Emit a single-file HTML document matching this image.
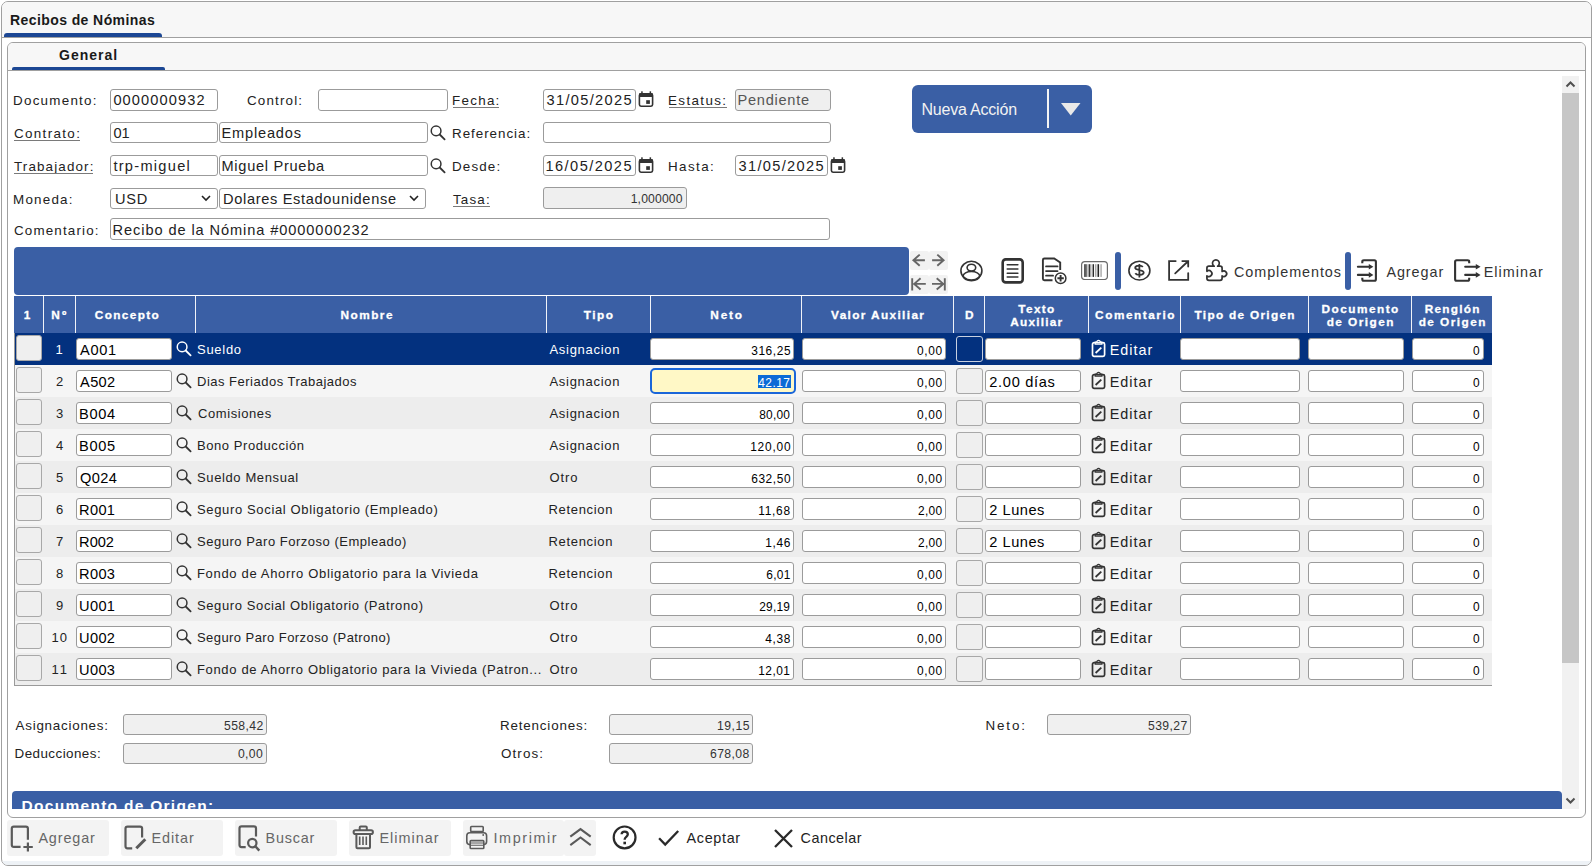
<!DOCTYPE html>
<html><head><meta charset="utf-8"><style>
html,body{margin:0;padding:0;width:1592px;height:867px;overflow:hidden;background:#fff}
body{position:relative;font-family:"Liberation Sans",sans-serif}
div,svg{position:absolute}
.t{white-space:pre;line-height:normal;font-family:"Liberation Sans",sans-serif}
</style></head><body>
<div style="left:1px;top:1px;width:1591px;height:865px;box-sizing:border-box;border:1px solid #a0a0a0;border-radius:7px;background:#fff"></div>
<div style="left:2px;top:2px;width:1589px;height:35px;background:#f7f7f7;border-radius:6px 6px 0 0"></div>
<div style="left:1px;top:37px;width:1591px;height:1px;background:#a0a0a0"></div>
<div style="left:4px;top:33px;width:158px;height:4px;background:#1c4794;border-radius:3px 3px 0 0"></div>
<div class="t" style="left:10.00px;top:12.00px;font-size:14px;font-weight:700;color:#1a1a1a;letter-spacing:0.412px;">Recibos de Nóminas</div>
<div style="left:7px;top:42px;width:1579px;height:776px;box-sizing:border-box;border:1px solid #a0a0a0;border-radius:6px;background:#fff"></div>
<div style="left:8px;top:43px;width:1577px;height:27px;background:#f7f7f7;border-radius:5px 5px 0 0"></div>
<div style="left:7px;top:70px;width:1579px;height:1px;background:#a0a0a0"></div>
<div style="left:12px;top:67px;width:153px;height:3px;background:#1c4794;border-radius:2px 2px 0 0"></div>
<div class="t" style="left:59.00px;top:47.00px;font-size:14px;font-weight:700;color:#1a1a1a;letter-spacing:1.000px;">General</div>
<div style="left:2px;top:2px;width:1589px;height:863px;border-radius:6px;overflow:hidden"><div style="left:0;top:859px;width:1589px;height:4px;background:#eef2f6"></div></div>
<div style="left:1562px;top:76px;width:17px;height:733px;background:#f1f1f1"></div>
<div style="left:1562px;top:93px;width:17px;height:570px;background:#c6c6c6"></div>
<svg style="position:absolute;left:1562px;top:76px;" width="17" height="17" viewBox="0 0 17 17"><path d="M4.5 10.5 L8.5 6.5 L12.5 10.5" fill="none" stroke="#505050" stroke-width="2"/></svg>
<svg style="position:absolute;left:1562px;top:792px;" width="17" height="17" viewBox="0 0 17 17"><path d="M4.5 6.5 L8.5 10.5 L12.5 6.5" fill="none" stroke="#505050" stroke-width="2"/></svg>
<div class="t" style="left:13.00px;top:93.00px;font-size:13.4px;font-weight:400;color:#222222;letter-spacing:1.256px;">Documento:</div>
<div style="left:110px;top:89px;width:108px;height:22px;box-sizing:border-box;background:#fff;border:1px solid #9b9b9b;border-radius:3px"></div>
<div class="t" style="left:113.40px;top:92.00px;font-size:14.6px;font-weight:400;color:#222222;letter-spacing:1.111px;">0000000932</div>
<div class="t" style="left:247.00px;top:93.00px;font-size:13.4px;font-weight:400;color:#222222;letter-spacing:1.157px;">Control:</div>
<div style="left:318px;top:89px;width:130px;height:22px;box-sizing:border-box;background:#fff;border:1px solid #9b9b9b;border-radius:3px"></div>
<div class="t" style="left:452.00px;top:93.00px;font-size:13.4px;font-weight:400;color:#222222;letter-spacing:1.280px;">Fecha:</div>
<div style="left:453px;top:107px;width:46px;height:1px;background:#7a7a7a"></div>
<div style="left:543px;top:89px;width:93px;height:22px;box-sizing:border-box;background:#fff;border:1px solid #9b9b9b;border-radius:3px"></div>
<div class="t" style="left:546.50px;top:92.00px;font-size:14.6px;font-weight:400;color:#222222;letter-spacing:1.333px;">31/05/2025</div>
<svg style="position:absolute;left:638px;top:91px;" width="16" height="17" viewBox="0 0 16 17"><rect x="1.4" y="2.9" width="13.2" height="12.3" rx="1.6" fill="none" stroke="#333" stroke-width="1.6"/><rect x="1" y="2.3" width="14" height="3.6" rx="1" fill="#333"/><rect x="3.2" y="0.3" width="1.5" height="2.5" fill="#333"/><rect x="11.6" y="0.3" width="1.5" height="2.5" fill="#333"/><rect x="8.2" y="9.2" width="3.7" height="3.7" fill="#333"/></svg>
<div class="t" style="left:668.00px;top:93.00px;font-size:13.4px;font-weight:400;color:#222222;letter-spacing:1.386px;">Estatus:</div>
<div style="left:669px;top:107px;width:58px;height:1px;background:#7a7a7a"></div>
<div style="left:735px;top:89px;width:96px;height:22px;box-sizing:border-box;background:#efefef;border:1px solid #9b9b9b;border-radius:3px"></div>
<div class="t" style="left:737.60px;top:92.00px;font-size:14.6px;font-weight:400;color:#555;letter-spacing:0.713px;">Pendiente</div>
<div class="t" style="left:14.00px;top:126.00px;font-size:13.4px;font-weight:400;color:#222222;letter-spacing:1.350px;">Contrato:</div>
<div style="left:14px;top:140px;width:66px;height:1px;background:#7a7a7a"></div>
<div style="left:110px;top:122px;width:108px;height:21px;box-sizing:border-box;background:#fff;border:1px solid #9b9b9b;border-radius:3px"></div>
<div class="t" style="left:113.40px;top:125.00px;font-size:14.6px;font-weight:400;color:#222222;letter-spacing:0.000px;">01</div>
<div style="left:219px;top:122px;width:209px;height:21px;box-sizing:border-box;background:#fff;border:1px solid #9b9b9b;border-radius:3px"></div>
<div class="t" style="left:221.50px;top:125.00px;font-size:14.6px;font-weight:400;color:#222222;letter-spacing:0.812px;">Empleados</div>
<svg style="position:absolute;left:430px;top:124.5px;" width="17" height="17" viewBox="0 0 17 17"><circle cx="6.1" cy="5.9" r="4.85" fill="none" stroke="#333" stroke-width="1.5"/><path d="M9.7 9.5 L14.6 14.4" stroke="#333" stroke-width="1.8" stroke-linecap="round"/></svg>
<div class="t" style="left:452.00px;top:126.00px;font-size:13.4px;font-weight:400;color:#222222;letter-spacing:0.970px;">Referencia:</div>
<div style="left:543px;top:122px;width:288px;height:21px;box-sizing:border-box;background:#fff;border:1px solid #9b9b9b;border-radius:3px"></div>
<div class="t" style="left:14.00px;top:159.00px;font-size:13.4px;font-weight:400;color:#222222;letter-spacing:1.140px;">Trabajador:</div>
<div style="left:14px;top:173px;width:79px;height:1px;background:#7a7a7a"></div>
<div style="left:110px;top:155px;width:108px;height:21px;box-sizing:border-box;background:#fff;border:1px solid #9b9b9b;border-radius:3px"></div>
<div class="t" style="left:113.40px;top:158.00px;font-size:14.6px;font-weight:400;color:#222222;letter-spacing:1.278px;">trp-miguel</div>
<div style="left:219px;top:155px;width:209px;height:21px;box-sizing:border-box;background:#fff;border:1px solid #9b9b9b;border-radius:3px"></div>
<div class="t" style="left:221.50px;top:158.00px;font-size:14.6px;font-weight:400;color:#222222;letter-spacing:0.708px;">Miguel Prueba</div>
<svg style="position:absolute;left:430px;top:157.5px;" width="17" height="17" viewBox="0 0 17 17"><circle cx="6.1" cy="5.9" r="4.85" fill="none" stroke="#333" stroke-width="1.5"/><path d="M9.7 9.5 L14.6 14.4" stroke="#333" stroke-width="1.8" stroke-linecap="round"/></svg>
<div class="t" style="left:452.00px;top:159.00px;font-size:13.4px;font-weight:400;color:#222222;letter-spacing:1.140px;">Desde:</div>
<div style="left:543px;top:155px;width:93px;height:21px;box-sizing:border-box;background:#fff;border:1px solid #9b9b9b;border-radius:3px"></div>
<div class="t" style="left:545.50px;top:158.00px;font-size:14.6px;font-weight:400;color:#222222;letter-spacing:1.444px;">16/05/2025</div>
<svg style="position:absolute;left:638px;top:157px;" width="16" height="17" viewBox="0 0 16 17"><rect x="1.4" y="2.9" width="13.2" height="12.3" rx="1.6" fill="none" stroke="#333" stroke-width="1.6"/><rect x="1" y="2.3" width="14" height="3.6" rx="1" fill="#333"/><rect x="3.2" y="0.3" width="1.5" height="2.5" fill="#333"/><rect x="11.6" y="0.3" width="1.5" height="2.5" fill="#333"/><rect x="8.2" y="9.2" width="3.7" height="3.7" fill="#333"/></svg>
<div class="t" style="left:668.00px;top:159.00px;font-size:13.4px;font-weight:400;color:#222222;letter-spacing:1.400px;">Hasta:</div>
<div style="left:735px;top:155px;width:93px;height:21px;box-sizing:border-box;background:#fff;border:1px solid #9b9b9b;border-radius:3px"></div>
<div class="t" style="left:738.50px;top:158.00px;font-size:14.6px;font-weight:400;color:#222222;letter-spacing:1.333px;">31/05/2025</div>
<svg style="position:absolute;left:830px;top:157px;" width="16" height="17" viewBox="0 0 16 17"><rect x="1.4" y="2.9" width="13.2" height="12.3" rx="1.6" fill="none" stroke="#333" stroke-width="1.6"/><rect x="1" y="2.3" width="14" height="3.6" rx="1" fill="#333"/><rect x="3.2" y="0.3" width="1.5" height="2.5" fill="#333"/><rect x="11.6" y="0.3" width="1.5" height="2.5" fill="#333"/><rect x="8.2" y="9.2" width="3.7" height="3.7" fill="#333"/></svg>
<div class="t" style="left:13.00px;top:192.00px;font-size:13.4px;font-weight:400;color:#222222;letter-spacing:1.233px;">Moneda:</div>
<div style="left:110px;top:188px;width:108px;height:21px;box-sizing:border-box;background:#fff;border:1px solid #9b9b9b;border-radius:3px"></div>
<div class="t" style="left:115.00px;top:191.00px;font-size:14.6px;font-weight:400;color:#222222;letter-spacing:0.750px;">USD</div>
<svg style="position:absolute;left:200px;top:193px;" width="12" height="10" viewBox="0 0 12 10"><path d="M2 3 L6 7 L10 3" fill="none" stroke="#222" stroke-width="1.6"/></svg>
<div style="left:219px;top:188px;width:207px;height:21px;box-sizing:border-box;background:#fff;border:1px solid #9b9b9b;border-radius:3px"></div>
<div class="t" style="left:223.00px;top:191.00px;font-size:14.6px;font-weight:400;color:#222222;letter-spacing:0.667px;">Dolares Estadounidense</div>
<svg style="position:absolute;left:408px;top:193px;" width="12" height="10" viewBox="0 0 12 10"><path d="M2 3 L6 7 L10 3" fill="none" stroke="#222" stroke-width="1.6"/></svg>
<div class="t" style="left:453.00px;top:192.00px;font-size:13.4px;font-weight:400;color:#222222;letter-spacing:1.150px;">Tasa:</div>
<div style="left:453px;top:206px;width:37px;height:1px;background:#7a7a7a"></div>
<div style="left:543px;top:187px;width:144px;height:22px;box-sizing:border-box;background:#efefef;border:1px solid #9b9b9b;border-radius:3px"></div>
<div class="t" style="left:630.70px;top:192.00px;font-size:12.2px;font-weight:400;color:#333;letter-spacing:0.143px;">1,000000</div>
<div class="t" style="left:14.00px;top:223.00px;font-size:13.4px;font-weight:400;color:#222222;letter-spacing:1.160px;">Comentario:</div>
<div style="left:110px;top:218px;width:720px;height:22px;box-sizing:border-box;background:#fff;border:1px solid #9b9b9b;border-radius:3px"></div>
<div class="t" style="left:112.60px;top:222.00px;font-size:14.6px;font-weight:400;color:#222222;letter-spacing:0.907px;">Recibo de la Nómina #0000000232</div>
<div style="left:912px;top:85px;width:180px;height:48px;background:#3a5fa5;border-radius:6px"></div>
<div class="t" style="left:921.40px;top:101.00px;font-size:16px;font-weight:400;color:#f2f2f2;letter-spacing:-0.200px;transform-origin:0 0;">Nueva Acción</div>
<div style="left:1047px;top:89px;width:2px;height:39px;background:#f4f4f4"></div>
<svg style="position:absolute;left:1061px;top:103px;" width="20" height="13" viewBox="0 0 20 13"><path d="M0 0 L19.5 0 L9.75 12.5 Z" fill="#e9e9e9"/></svg>
<div style="left:14px;top:247px;width:895px;height:48px;background:#3a5fa5;border-radius:4px"></div>
<div style="left:910px;top:251px;width:19px;height:19px;background:#f2f2f2;border-radius:2px"></div>
<div style="left:929px;top:251px;width:19px;height:19px;background:#f2f2f2;border-radius:2px"></div>
<div style="left:910px;top:275px;width:19px;height:19px;background:#f2f2f2;border-radius:2px"></div>
<div style="left:929px;top:275px;width:19px;height:19px;background:#f2f2f2;border-radius:2px"></div>
<svg style="position:absolute;left:910px;top:251px;" width="38" height="43" viewBox="0 0 38 43"><path d="M14.9 9.2 H3.2 M9.7 3.6 L3.4 9.2 L9.7 14.8 M22.1 9.2 H33.8 M27.3 3.6 L33.6 9.2 L27.3 14.8" fill="none" stroke="#666666" stroke-width="1.9"/><path d="M2.2 27.2 V39.6 M15.8 32.9 H4.2 M10.6 27.3 L4.2 32.9 L10.6 38.5 M34.8 27.2 V39.6 M22 32.9 H33.3 M26.7 27.3 L33.3 32.9 L26.7 38.5" fill="none" stroke="#666666" stroke-width="1.9"/></svg>
<svg style="position:absolute;left:959px;top:259px;" width="25" height="24" viewBox="0 0 25 24"><ellipse cx="12.4" cy="11.7" rx="10.5" ry="9.4" fill="none" stroke="#333" stroke-width="1.6"/><ellipse cx="12.4" cy="8.6" rx="4.3" ry="3.4" fill="none" stroke="#333" stroke-width="1.6"/><ellipse cx="12.4" cy="17.1" rx="8.3" ry="4.6" fill="none" stroke="#333" stroke-width="1.6"/></svg>
<svg style="position:absolute;left:1000px;top:257px;" width="26" height="28" viewBox="0 0 26 28"><rect x="2.7" y="2.4" width="20" height="23" rx="3" fill="none" stroke="#333" stroke-width="2.6"/><path d="M7.2 7.7 H17.9 M7.2 11.9 H17.9 M7.2 16.3 H17.9 M7.2 20.1 H17.9" stroke="#333" stroke-width="1.5" stroke-linecap="round"/></svg>
<svg style="position:absolute;left:1040px;top:256px;" width="30" height="30" viewBox="0 0 30 30"><path d="M12.5 24.3 H4.4 Q2.9 24.3 2.9 22.8 V4 Q2.9 2.5 4.4 2.5 H14.2 L20.2 6.5 V14.1" fill="none" stroke="#333" stroke-width="1.9"/><path d="M6 10.4 H17.6 M6 15.1 H17.6 M6 19.7 H13.1" stroke="#333" stroke-width="1.7" stroke-linecap="round"/><circle cx="20.6" cy="22.3" r="5.3" fill="#fff" stroke="#333" stroke-width="1.5"/><path d="M20.6 19.1 V25.5 M17.4 22.3 H23.8" stroke="#333" stroke-width="1.9"/></svg>
<svg style="position:absolute;left:1081px;top:261px;" width="27" height="19" viewBox="0 0 27 19"><rect x="0.6" y="0.6" width="25.8" height="17.9" rx="3.2" fill="none" stroke="#6a6a6a" stroke-width="1.2"/><rect x="3.2" y="3.2" width="1.6" height="12.7" fill="#333"/><rect x="4.8" y="3.2" width="1.6" height="12.7" fill="#777"/><rect x="7.6" y="3.2" width="1.3" height="12.7" fill="#222"/><rect x="9.2" y="3.2" width="1.2" height="12.7" fill="#999"/><rect x="11.6" y="3.2" width="1.3" height="12.7" fill="#111"/><rect x="13.9" y="3.2" width="1.6" height="12.7" fill="#aaa"/><rect x="16.5" y="3.2" width="1.6" height="12.7" fill="#222"/><rect x="19.2" y="3.2" width="1.8" height="12.7" fill="#bbb"/></svg>
<div style="left:1115px;top:252px;width:6px;height:38px;background:#3a5fa5;border-radius:3px"></div>
<svg style="position:absolute;left:1127px;top:259px;" width="25" height="23" viewBox="0 0 25 23"><ellipse cx="12.4" cy="11.6" rx="10.5" ry="9.4" fill="none" stroke="#333" stroke-width="1.6"/><path d="M15.8 7.9 C14.8 6.3 8.2 6 8.2 8.9 C8.2 11.2 16.7 10.8 16.7 13.6 C16.7 16.6 9.6 16.6 8.3 14.3 M12.4 4.9 V18.6" fill="none" stroke="#333" stroke-width="1.8"/></svg>
<svg style="position:absolute;left:1167px;top:259px;" width="24" height="23" viewBox="0 0 24 23"><path d="M8.7 2.1 H2.1 V20.9 H21.2 V14.1" fill="none" stroke="#333" stroke-width="1.8" stroke-linecap="round"/><path d="M8.2 14.3 L20.8 2.5 M15.3 2.1 H21.2 V7.5" fill="none" stroke="#333" stroke-width="1.8" stroke-linecap="round"/></svg>
<svg style="position:absolute;left:1204px;top:258px;" width="27" height="25" viewBox="0 0 27 25"><path d="M2.9 10.2 Q2.9 8.2 4.9 8.2 H10.2 A3.4 3.4 0 1 1 13.6 8.2 H16.1 Q18.1 8.2 18.1 10.2 V13.5 A2.8 2.8 0 1 1 18.1 17.9 V20.3 Q18.1 22.3 16.1 22.3 H4.9 Q2.9 22.3 2.9 20.3 V17.8 A3 3 0 1 0 2.9 13.3 Z" fill="none" stroke="#333" stroke-width="1.7" stroke-linejoin="round"/></svg>
<div class="t" style="left:1234.00px;top:264.00px;font-size:14.4px;font-weight:400;color:#333;letter-spacing:0.927px;">Complementos</div>
<div style="left:1345px;top:252px;width:6px;height:38px;background:#3a5fa5;border-radius:3px"></div>
<svg style="position:absolute;left:1355px;top:257px;" width="24" height="27" viewBox="0 0 24 27"><path d="M7.3 6.2 V4.7 Q7.3 3.2 8.8 3.2 H19.4 Q20.9 3.2 20.9 4.7 V22.3 Q20.9 23.8 19.4 23.8 H8.8 Q7.3 23.8 7.3 22.3 V20.7" fill="none" stroke="#333" stroke-width="2.1"/><path d="M2.9 9.75 H14.5 M2.9 17.9 H14.5" stroke="#333" stroke-width="2.1" stroke-linecap="round"/><path d="M13.8 6.9 L18.4 9.75 L13.8 12.6 Z M13.8 15.05 L18.4 17.9 L13.8 20.75 Z" fill="#333"/></svg>
<div class="t" style="left:1386.40px;top:264.00px;font-size:14.4px;font-weight:400;color:#333;letter-spacing:0.933px;">Agregar</div>
<svg style="position:absolute;left:1452px;top:257px;" width="31" height="27" viewBox="0 0 31 27"><path d="M17.2 6.3 V4.7 Q17.2 3.2 15.7 3.2 H4.6 Q3.1 3.2 3.1 4.7 V22.3 Q3.1 23.8 4.6 23.8 H15.7 Q17.2 23.8 17.2 22.3 V20.7" fill="none" stroke="#333" stroke-width="2.1"/><path d="M13.2 9.75 H24.5 M13.2 17.9 H24.5" stroke="#333" stroke-width="2.1" stroke-linecap="round"/><path d="M23.8 6.9 L28.6 9.75 L23.8 12.6 Z M23.8 15.05 L28.6 17.9 L23.8 20.75 Z" fill="#333"/></svg>
<div class="t" style="left:1483.70px;top:264.00px;font-size:14.4px;font-weight:400;color:#333;letter-spacing:1.014px;">Eliminar</div>
<div style="left:14px;top:296px;width:1478px;height:37px;background:#3a5fa5"></div>
<div style="left:43px;top:296px;width:1px;height:37px;background:#f0f3f8"></div>
<div style="left:75px;top:296px;width:1px;height:37px;background:#f0f3f8"></div>
<div style="left:195px;top:296px;width:1px;height:37px;background:#f0f3f8"></div>
<div style="left:546px;top:296px;width:1px;height:37px;background:#f0f3f8"></div>
<div style="left:650px;top:296px;width:1px;height:37px;background:#f0f3f8"></div>
<div style="left:801px;top:296px;width:1px;height:37px;background:#f0f3f8"></div>
<div style="left:953px;top:296px;width:1px;height:37px;background:#f0f3f8"></div>
<div style="left:984px;top:296px;width:1px;height:37px;background:#f0f3f8"></div>
<div style="left:1088px;top:296px;width:1px;height:37px;background:#f0f3f8"></div>
<div style="left:1180px;top:296px;width:1px;height:37px;background:#f0f3f8"></div>
<div style="left:1308px;top:296px;width:1px;height:37px;background:#f0f3f8"></div>
<div style="left:1411px;top:296px;width:1px;height:37px;background:#f0f3f8"></div>
<div class="t" style="left:23.80px;top:308.00px;font-size:11.8px;font-weight:700;color:#ffffff;letter-spacing:0.000px;-webkit-text-stroke:0.3px #fff;">1</div>
<div class="t" style="left:51.32px;top:308.00px;font-size:11.8px;font-weight:700;color:#ffffff;letter-spacing:2.150px;-webkit-text-stroke:0.3px #fff;">Nº</div>
<div class="t" style="left:94.78px;top:308.00px;font-size:11.8px;font-weight:700;color:#ffffff;letter-spacing:1.376px;-webkit-text-stroke:0.3px #fff;">Concepto</div>
<div class="t" style="left:340.44px;top:308.00px;font-size:11.8px;font-weight:700;color:#ffffff;letter-spacing:1.504px;-webkit-text-stroke:0.3px #fff;">Nombre</div>
<div class="t" style="left:583.86px;top:308.00px;font-size:11.8px;font-weight:700;color:#ffffff;letter-spacing:1.430px;-webkit-text-stroke:0.3px #fff;">Tipo</div>
<div class="t" style="left:710.35px;top:308.00px;font-size:11.8px;font-weight:700;color:#ffffff;letter-spacing:1.770px;-webkit-text-stroke:0.3px #fff;">Neto</div>
<div class="t" style="left:831.04px;top:308.00px;font-size:11.8px;font-weight:700;color:#ffffff;letter-spacing:1.378px;-webkit-text-stroke:0.3px #fff;">Valor Auxiliar</div>
<div class="t" style="left:965.00px;top:308.00px;font-size:11.8px;font-weight:700;color:#ffffff;letter-spacing:0.000px;-webkit-text-stroke:0.3px #fff;">D</div>
<div class="t" style="left:1018.32px;top:302.00px;font-size:11.8px;font-weight:700;color:#ffffff;letter-spacing:1.340px;-webkit-text-stroke:0.3px #fff;">Texto</div>
<div class="t" style="left:1010.24px;top:315.00px;font-size:11.8px;font-weight:700;color:#ffffff;letter-spacing:1.217px;-webkit-text-stroke:0.3px #fff;">Auxiliar</div>
<div class="t" style="left:1095.11px;top:308.00px;font-size:11.8px;font-weight:700;color:#ffffff;letter-spacing:1.531px;-webkit-text-stroke:0.3px #fff;">Comentario</div>
<div class="t" style="left:1194.51px;top:308.00px;font-size:11.8px;font-weight:700;color:#ffffff;letter-spacing:1.307px;-webkit-text-stroke:0.3px #fff;">Tipo de Origen</div>
<div class="t" style="left:1321.62px;top:302.00px;font-size:11.8px;font-weight:700;color:#ffffff;letter-spacing:1.470px;-webkit-text-stroke:0.3px #fff;">Documento</div>
<div class="t" style="left:1326.67px;top:315.00px;font-size:11.8px;font-weight:700;color:#ffffff;letter-spacing:1.457px;-webkit-text-stroke:0.3px #fff;">de Origen</div>
<div class="t" style="left:1424.73px;top:302.00px;font-size:11.8px;font-weight:700;color:#ffffff;letter-spacing:1.257px;-webkit-text-stroke:0.3px #fff;">Renglón</div>
<div class="t" style="left:1418.67px;top:315.00px;font-size:11.8px;font-weight:700;color:#ffffff;letter-spacing:1.457px;-webkit-text-stroke:0.3px #fff;">de Origen</div>
<div style="left:14px;top:333px;width:1px;height:353px;background:#9a9a9a"></div>
<div style="left:14px;top:685px;width:1478px;height:1px;background:#9a9a9a"></div>
<div style="left:15px;top:333px;width:1477px;height:32px;background:#03317f"></div>
<div style="left:16px;top:335px;width:26px;height:26px;box-sizing:border-box;background:#efefef;border:1px solid #a8a8a8;border-radius:3px"></div>
<div class="t" style="left:55.60px;top:342.00px;font-size:13px;font-weight:400;color:#ffffff;letter-spacing:0.000px;">1</div>
<div style="left:76px;top:338px;width:96px;height:22px;box-sizing:border-box;background:#fff;border:1px solid #9b9b9b;border-radius:3px"></div>
<div class="t" style="left:80.10px;top:342.00px;font-size:14.6px;font-weight:400;color:#000;letter-spacing:0.667px;">A001</div>
<svg style="position:absolute;left:176px;top:341px;" width="17" height="17" viewBox="0 0 17 17"><circle cx="6.1" cy="5.9" r="4.85" fill="none" stroke="#fff" stroke-width="1.5"/><path d="M9.7 9.5 L14.6 14.4" stroke="#fff" stroke-width="1.8" stroke-linecap="round"/></svg>
<div class="t" style="left:197.00px;top:342.00px;font-size:13.0px;font-weight:400;color:#ffffff;letter-spacing:0.714px;">Sueldo</div>
<div class="t" style="left:549.50px;top:342.00px;font-size:13.0px;font-weight:400;color:#ffffff;letter-spacing:0.700px;">Asignacion</div>
<div style="left:650px;top:338px;width:144px;height:22px;box-sizing:border-box;background:#fff;border:1px solid #9b9b9b;border-radius:3px"></div>
<div class="t" style="left:751.20px;top:344.00px;font-size:11.9px;font-weight:400;color:#000;letter-spacing:0.600px;">316,25</div>
<div style="left:802px;top:338px;width:144px;height:22px;box-sizing:border-box;background:#fff;border:1px solid #9b9b9b;border-radius:3px"></div>
<div class="t" style="left:917.00px;top:344.00px;font-size:11.9px;font-weight:400;color:#000;letter-spacing:0.667px;">0,00</div>
<div style="left:956px;top:336px;width:27px;height:26px;box-sizing:border-box;background:#03317f;border:1px solid #c8d0e0;border-radius:3px"></div>
<div style="left:985px;top:338px;width:96px;height:22px;box-sizing:border-box;background:#fff;border:1px solid #9b9b9b;border-radius:3px"></div>
<svg style="position:absolute;left:1090px;top:339px;" width="17" height="20" viewBox="0 0 17 20"><rect x="2.5" y="3.6" width="12.1" height="13.8" rx="1.6" fill="none" stroke="#fff" stroke-width="1.7"/><path d="M5.2 3.2 V5.2 H11.9 V3.2 H10.3 A1.75 1.75 0 0 0 6.8 3.2 Z" fill="none" stroke="#fff" stroke-width="1.3" stroke-linejoin="round"/><path d="M5.6 14 L11.3 8.6" stroke="#fff" stroke-width="1.8"/></svg>
<div class="t" style="left:1109.70px;top:342.00px;font-size:14.4px;font-weight:400;color:#ffffff;letter-spacing:0.980px;">Editar</div>
<div style="left:1180px;top:338px;width:120px;height:22px;box-sizing:border-box;background:#fff;border:1px solid #9b9b9b;border-radius:3px"></div>
<div style="left:1308px;top:338px;width:96px;height:22px;box-sizing:border-box;background:#fff;border:1px solid #9b9b9b;border-radius:3px"></div>
<div style="left:1412px;top:338px;width:72px;height:22px;box-sizing:border-box;background:#fff;border:1px solid #9b9b9b;border-radius:3px"></div>
<div class="t" style="left:1473.00px;top:344.00px;font-size:11.9px;font-weight:400;color:#000;letter-spacing:0.000px;">0</div>
<div style="left:15px;top:365px;width:1477px;height:32px;background:#f5f5f5"></div>
<div style="left:16px;top:367px;width:26px;height:26px;box-sizing:border-box;background:#efefef;border:1px solid #a8a8a8;border-radius:3px"></div>
<div class="t" style="left:56.10px;top:374.00px;font-size:13px;font-weight:400;color:#222222;letter-spacing:0.000px;">2</div>
<div style="left:76px;top:370px;width:96px;height:22px;box-sizing:border-box;background:#fff;border:1px solid #9b9b9b;border-radius:3px"></div>
<div class="t" style="left:80.10px;top:374.00px;font-size:14.6px;font-weight:400;color:#000;letter-spacing:0.333px;">A502</div>
<svg style="position:absolute;left:176px;top:373px;" width="17" height="17" viewBox="0 0 17 17"><circle cx="6.1" cy="5.9" r="4.85" fill="none" stroke="#333" stroke-width="1.5"/><path d="M9.7 9.5 L14.6 14.4" stroke="#333" stroke-width="1.8" stroke-linecap="round"/></svg>
<div class="t" style="left:197.00px;top:374.00px;font-size:13.0px;font-weight:400;color:#222222;letter-spacing:0.496px;">Dias Feriados Trabajados</div>
<div class="t" style="left:549.50px;top:374.00px;font-size:13.0px;font-weight:400;color:#222222;letter-spacing:0.700px;">Asignacion</div>
<div style="left:650px;top:368px;width:146px;height:26px;box-sizing:border-box;background:#fff8c6;border:2px solid #1a66d9;border-radius:5px"></div>
<div style="left:758px;top:375px;width:33px;height:13px;background:#0b6ad6"></div>
<div class="t" style="left:758.20px;top:376.00px;font-size:11.9px;font-weight:400;color:#fff;letter-spacing:0.500px;">42.17</div>
<div style="left:802px;top:370px;width:144px;height:22px;box-sizing:border-box;background:#fff;border:1px solid #9b9b9b;border-radius:3px"></div>
<div class="t" style="left:917.00px;top:376.00px;font-size:11.9px;font-weight:400;color:#000;letter-spacing:0.667px;">0,00</div>
<div style="left:956px;top:368px;width:27px;height:26px;box-sizing:border-box;background:#efefef;border:1px solid #a8a8a8;border-radius:3px"></div>
<div style="left:985px;top:370px;width:96px;height:22px;box-sizing:border-box;background:#fff;border:1px solid #9b9b9b;border-radius:3px"></div>
<div class="t" style="left:989.30px;top:374.00px;font-size:14.6px;font-weight:400;color:#000;letter-spacing:0.690px;">2.00 días</div>
<svg style="position:absolute;left:1090px;top:371px;" width="17" height="20" viewBox="0 0 17 20"><rect x="2.5" y="3.6" width="12.1" height="13.8" rx="1.6" fill="none" stroke="#333" stroke-width="1.7"/><path d="M5.2 3.2 V5.2 H11.9 V3.2 H10.3 A1.75 1.75 0 0 0 6.8 3.2 Z" fill="none" stroke="#333" stroke-width="1.3" stroke-linejoin="round"/><path d="M5.6 14 L11.3 8.6" stroke="#333" stroke-width="1.8"/></svg>
<div class="t" style="left:1109.70px;top:374.00px;font-size:14.4px;font-weight:400;color:#222222;letter-spacing:0.980px;">Editar</div>
<div style="left:1180px;top:370px;width:120px;height:22px;box-sizing:border-box;background:#fff;border:1px solid #9b9b9b;border-radius:3px"></div>
<div style="left:1308px;top:370px;width:96px;height:22px;box-sizing:border-box;background:#fff;border:1px solid #9b9b9b;border-radius:3px"></div>
<div style="left:1412px;top:370px;width:72px;height:22px;box-sizing:border-box;background:#fff;border:1px solid #9b9b9b;border-radius:3px"></div>
<div class="t" style="left:1473.00px;top:376.00px;font-size:11.9px;font-weight:400;color:#000;letter-spacing:0.000px;">0</div>
<div style="left:15px;top:397px;width:1477px;height:32px;background:#ededed"></div>
<div style="left:16px;top:399px;width:26px;height:26px;box-sizing:border-box;background:#efefef;border:1px solid #a8a8a8;border-radius:3px"></div>
<div class="t" style="left:56.10px;top:406.00px;font-size:13px;font-weight:400;color:#222222;letter-spacing:0.000px;">3</div>
<div style="left:76px;top:402px;width:96px;height:22px;box-sizing:border-box;background:#fff;border:1px solid #9b9b9b;border-radius:3px"></div>
<div class="t" style="left:79.10px;top:406.00px;font-size:14.6px;font-weight:400;color:#000;letter-spacing:0.667px;">B004</div>
<svg style="position:absolute;left:176px;top:405px;" width="17" height="17" viewBox="0 0 17 17"><circle cx="6.1" cy="5.9" r="4.85" fill="none" stroke="#333" stroke-width="1.5"/><path d="M9.7 9.5 L14.6 14.4" stroke="#333" stroke-width="1.8" stroke-linecap="round"/></svg>
<div class="t" style="left:198.00px;top:406.00px;font-size:13.0px;font-weight:400;color:#222222;letter-spacing:0.584px;">Comisiones</div>
<div class="t" style="left:549.50px;top:406.00px;font-size:13.0px;font-weight:400;color:#222222;letter-spacing:0.700px;">Asignacion</div>
<div style="left:650px;top:402px;width:144px;height:22px;box-sizing:border-box;background:#fff;border:1px solid #9b9b9b;border-radius:3px"></div>
<div class="t" style="left:759.20px;top:408.00px;font-size:11.9px;font-weight:400;color:#000;letter-spacing:0.250px;">80,00</div>
<div style="left:802px;top:402px;width:144px;height:22px;box-sizing:border-box;background:#fff;border:1px solid #9b9b9b;border-radius:3px"></div>
<div class="t" style="left:917.00px;top:408.00px;font-size:11.9px;font-weight:400;color:#000;letter-spacing:0.667px;">0,00</div>
<div style="left:956px;top:400px;width:27px;height:26px;box-sizing:border-box;background:#efefef;border:1px solid #a8a8a8;border-radius:3px"></div>
<div style="left:985px;top:402px;width:96px;height:22px;box-sizing:border-box;background:#fff;border:1px solid #9b9b9b;border-radius:3px"></div>
<svg style="position:absolute;left:1090px;top:403px;" width="17" height="20" viewBox="0 0 17 20"><rect x="2.5" y="3.6" width="12.1" height="13.8" rx="1.6" fill="none" stroke="#333" stroke-width="1.7"/><path d="M5.2 3.2 V5.2 H11.9 V3.2 H10.3 A1.75 1.75 0 0 0 6.8 3.2 Z" fill="none" stroke="#333" stroke-width="1.3" stroke-linejoin="round"/><path d="M5.6 14 L11.3 8.6" stroke="#333" stroke-width="1.8"/></svg>
<div class="t" style="left:1109.70px;top:406.00px;font-size:14.4px;font-weight:400;color:#222222;letter-spacing:0.980px;">Editar</div>
<div style="left:1180px;top:402px;width:120px;height:22px;box-sizing:border-box;background:#fff;border:1px solid #9b9b9b;border-radius:3px"></div>
<div style="left:1308px;top:402px;width:96px;height:22px;box-sizing:border-box;background:#fff;border:1px solid #9b9b9b;border-radius:3px"></div>
<div style="left:1412px;top:402px;width:72px;height:22px;box-sizing:border-box;background:#fff;border:1px solid #9b9b9b;border-radius:3px"></div>
<div class="t" style="left:1473.00px;top:408.00px;font-size:11.9px;font-weight:400;color:#000;letter-spacing:0.000px;">0</div>
<div style="left:15px;top:429px;width:1477px;height:32px;background:#f5f5f5"></div>
<div style="left:16px;top:431px;width:26px;height:26px;box-sizing:border-box;background:#efefef;border:1px solid #a8a8a8;border-radius:3px"></div>
<div class="t" style="left:56.10px;top:438.00px;font-size:13px;font-weight:400;color:#222222;letter-spacing:0.000px;">4</div>
<div style="left:76px;top:434px;width:96px;height:22px;box-sizing:border-box;background:#fff;border:1px solid #9b9b9b;border-radius:3px"></div>
<div class="t" style="left:79.10px;top:438.00px;font-size:14.6px;font-weight:400;color:#000;letter-spacing:0.667px;">B005</div>
<svg style="position:absolute;left:176px;top:437px;" width="17" height="17" viewBox="0 0 17 17"><circle cx="6.1" cy="5.9" r="4.85" fill="none" stroke="#333" stroke-width="1.5"/><path d="M9.7 9.5 L14.6 14.4" stroke="#333" stroke-width="1.8" stroke-linecap="round"/></svg>
<div class="t" style="left:197.00px;top:438.00px;font-size:13.0px;font-weight:400;color:#222222;letter-spacing:0.566px;">Bono Producción</div>
<div class="t" style="left:549.50px;top:438.00px;font-size:13.0px;font-weight:400;color:#222222;letter-spacing:0.700px;">Asignacion</div>
<div style="left:650px;top:434px;width:144px;height:22px;box-sizing:border-box;background:#fff;border:1px solid #9b9b9b;border-radius:3px"></div>
<div class="t" style="left:750.20px;top:440.00px;font-size:11.9px;font-weight:400;color:#000;letter-spacing:0.800px;">120,00</div>
<div style="left:802px;top:434px;width:144px;height:22px;box-sizing:border-box;background:#fff;border:1px solid #9b9b9b;border-radius:3px"></div>
<div class="t" style="left:917.00px;top:440.00px;font-size:11.9px;font-weight:400;color:#000;letter-spacing:0.667px;">0,00</div>
<div style="left:956px;top:432px;width:27px;height:26px;box-sizing:border-box;background:#efefef;border:1px solid #a8a8a8;border-radius:3px"></div>
<div style="left:985px;top:434px;width:96px;height:22px;box-sizing:border-box;background:#fff;border:1px solid #9b9b9b;border-radius:3px"></div>
<svg style="position:absolute;left:1090px;top:435px;" width="17" height="20" viewBox="0 0 17 20"><rect x="2.5" y="3.6" width="12.1" height="13.8" rx="1.6" fill="none" stroke="#333" stroke-width="1.7"/><path d="M5.2 3.2 V5.2 H11.9 V3.2 H10.3 A1.75 1.75 0 0 0 6.8 3.2 Z" fill="none" stroke="#333" stroke-width="1.3" stroke-linejoin="round"/><path d="M5.6 14 L11.3 8.6" stroke="#333" stroke-width="1.8"/></svg>
<div class="t" style="left:1109.70px;top:438.00px;font-size:14.4px;font-weight:400;color:#222222;letter-spacing:0.980px;">Editar</div>
<div style="left:1180px;top:434px;width:120px;height:22px;box-sizing:border-box;background:#fff;border:1px solid #9b9b9b;border-radius:3px"></div>
<div style="left:1308px;top:434px;width:96px;height:22px;box-sizing:border-box;background:#fff;border:1px solid #9b9b9b;border-radius:3px"></div>
<div style="left:1412px;top:434px;width:72px;height:22px;box-sizing:border-box;background:#fff;border:1px solid #9b9b9b;border-radius:3px"></div>
<div class="t" style="left:1473.00px;top:440.00px;font-size:11.9px;font-weight:400;color:#000;letter-spacing:0.000px;">0</div>
<div style="left:15px;top:461px;width:1477px;height:32px;background:#ededed"></div>
<div style="left:16px;top:463px;width:26px;height:26px;box-sizing:border-box;background:#efefef;border:1px solid #a8a8a8;border-radius:3px"></div>
<div class="t" style="left:56.10px;top:470.00px;font-size:13px;font-weight:400;color:#222222;letter-spacing:0.000px;">5</div>
<div style="left:76px;top:466px;width:96px;height:22px;box-sizing:border-box;background:#fff;border:1px solid #9b9b9b;border-radius:3px"></div>
<div class="t" style="left:80.10px;top:470.00px;font-size:14.6px;font-weight:400;color:#000;letter-spacing:0.333px;">Q024</div>
<svg style="position:absolute;left:176px;top:469px;" width="17" height="17" viewBox="0 0 17 17"><circle cx="6.1" cy="5.9" r="4.85" fill="none" stroke="#333" stroke-width="1.5"/><path d="M9.7 9.5 L14.6 14.4" stroke="#333" stroke-width="1.8" stroke-linecap="round"/></svg>
<div class="t" style="left:197.00px;top:470.00px;font-size:13.0px;font-weight:400;color:#222222;letter-spacing:0.615px;">Sueldo Mensual</div>
<div class="t" style="left:549.50px;top:470.00px;font-size:13.0px;font-weight:400;color:#222222;letter-spacing:0.907px;">Otro</div>
<div style="left:650px;top:466px;width:144px;height:22px;box-sizing:border-box;background:#fff;border:1px solid #9b9b9b;border-radius:3px"></div>
<div class="t" style="left:751.20px;top:472.00px;font-size:11.9px;font-weight:400;color:#000;letter-spacing:0.600px;">632,50</div>
<div style="left:802px;top:466px;width:144px;height:22px;box-sizing:border-box;background:#fff;border:1px solid #9b9b9b;border-radius:3px"></div>
<div class="t" style="left:917.00px;top:472.00px;font-size:11.9px;font-weight:400;color:#000;letter-spacing:0.667px;">0,00</div>
<div style="left:956px;top:464px;width:27px;height:26px;box-sizing:border-box;background:#efefef;border:1px solid #a8a8a8;border-radius:3px"></div>
<div style="left:985px;top:466px;width:96px;height:22px;box-sizing:border-box;background:#fff;border:1px solid #9b9b9b;border-radius:3px"></div>
<svg style="position:absolute;left:1090px;top:467px;" width="17" height="20" viewBox="0 0 17 20"><rect x="2.5" y="3.6" width="12.1" height="13.8" rx="1.6" fill="none" stroke="#333" stroke-width="1.7"/><path d="M5.2 3.2 V5.2 H11.9 V3.2 H10.3 A1.75 1.75 0 0 0 6.8 3.2 Z" fill="none" stroke="#333" stroke-width="1.3" stroke-linejoin="round"/><path d="M5.6 14 L11.3 8.6" stroke="#333" stroke-width="1.8"/></svg>
<div class="t" style="left:1109.70px;top:470.00px;font-size:14.4px;font-weight:400;color:#222222;letter-spacing:0.980px;">Editar</div>
<div style="left:1180px;top:466px;width:120px;height:22px;box-sizing:border-box;background:#fff;border:1px solid #9b9b9b;border-radius:3px"></div>
<div style="left:1308px;top:466px;width:96px;height:22px;box-sizing:border-box;background:#fff;border:1px solid #9b9b9b;border-radius:3px"></div>
<div style="left:1412px;top:466px;width:72px;height:22px;box-sizing:border-box;background:#fff;border:1px solid #9b9b9b;border-radius:3px"></div>
<div class="t" style="left:1473.00px;top:472.00px;font-size:11.9px;font-weight:400;color:#000;letter-spacing:0.000px;">0</div>
<div style="left:15px;top:493px;width:1477px;height:32px;background:#f5f5f5"></div>
<div style="left:16px;top:495px;width:26px;height:26px;box-sizing:border-box;background:#efefef;border:1px solid #a8a8a8;border-radius:3px"></div>
<div class="t" style="left:56.10px;top:502.00px;font-size:13px;font-weight:400;color:#222222;letter-spacing:0.000px;">6</div>
<div style="left:76px;top:498px;width:96px;height:22px;box-sizing:border-box;background:#fff;border:1px solid #9b9b9b;border-radius:3px"></div>
<div class="t" style="left:79.10px;top:502.00px;font-size:14.6px;font-weight:400;color:#000;letter-spacing:0.333px;">R001</div>
<svg style="position:absolute;left:176px;top:501px;" width="17" height="17" viewBox="0 0 17 17"><circle cx="6.1" cy="5.9" r="4.85" fill="none" stroke="#333" stroke-width="1.5"/><path d="M9.7 9.5 L14.6 14.4" stroke="#333" stroke-width="1.8" stroke-linecap="round"/></svg>
<div class="t" style="left:197.00px;top:502.00px;font-size:13.0px;font-weight:400;color:#222222;letter-spacing:0.645px;">Seguro Social Obligatorio (Empleado)</div>
<div class="t" style="left:548.50px;top:502.00px;font-size:13.0px;font-weight:400;color:#222222;letter-spacing:0.671px;">Retencion</div>
<div style="left:650px;top:498px;width:144px;height:22px;box-sizing:border-box;background:#fff;border:1px solid #9b9b9b;border-radius:3px"></div>
<div class="t" style="left:758.20px;top:504.00px;font-size:11.9px;font-weight:400;color:#000;letter-spacing:0.750px;">11,68</div>
<div style="left:802px;top:498px;width:144px;height:22px;box-sizing:border-box;background:#fff;border:1px solid #9b9b9b;border-radius:3px"></div>
<div class="t" style="left:918.00px;top:504.00px;font-size:11.9px;font-weight:400;color:#000;letter-spacing:0.333px;">2,00</div>
<div style="left:956px;top:496px;width:27px;height:26px;box-sizing:border-box;background:#efefef;border:1px solid #a8a8a8;border-radius:3px"></div>
<div style="left:985px;top:498px;width:96px;height:22px;box-sizing:border-box;background:#fff;border:1px solid #9b9b9b;border-radius:3px"></div>
<div class="t" style="left:989.30px;top:502.00px;font-size:14.6px;font-weight:400;color:#000;letter-spacing:0.520px;">2 Lunes</div>
<svg style="position:absolute;left:1090px;top:499px;" width="17" height="20" viewBox="0 0 17 20"><rect x="2.5" y="3.6" width="12.1" height="13.8" rx="1.6" fill="none" stroke="#333" stroke-width="1.7"/><path d="M5.2 3.2 V5.2 H11.9 V3.2 H10.3 A1.75 1.75 0 0 0 6.8 3.2 Z" fill="none" stroke="#333" stroke-width="1.3" stroke-linejoin="round"/><path d="M5.6 14 L11.3 8.6" stroke="#333" stroke-width="1.8"/></svg>
<div class="t" style="left:1109.70px;top:502.00px;font-size:14.4px;font-weight:400;color:#222222;letter-spacing:0.980px;">Editar</div>
<div style="left:1180px;top:498px;width:120px;height:22px;box-sizing:border-box;background:#fff;border:1px solid #9b9b9b;border-radius:3px"></div>
<div style="left:1308px;top:498px;width:96px;height:22px;box-sizing:border-box;background:#fff;border:1px solid #9b9b9b;border-radius:3px"></div>
<div style="left:1412px;top:498px;width:72px;height:22px;box-sizing:border-box;background:#fff;border:1px solid #9b9b9b;border-radius:3px"></div>
<div class="t" style="left:1473.00px;top:504.00px;font-size:11.9px;font-weight:400;color:#000;letter-spacing:0.000px;">0</div>
<div style="left:15px;top:525px;width:1477px;height:32px;background:#ededed"></div>
<div style="left:16px;top:527px;width:26px;height:26px;box-sizing:border-box;background:#efefef;border:1px solid #a8a8a8;border-radius:3px"></div>
<div class="t" style="left:56.10px;top:534.00px;font-size:13px;font-weight:400;color:#222222;letter-spacing:0.000px;">7</div>
<div style="left:76px;top:530px;width:96px;height:22px;box-sizing:border-box;background:#fff;border:1px solid #9b9b9b;border-radius:3px"></div>
<div class="t" style="left:79.10px;top:534.00px;font-size:14.6px;font-weight:400;color:#000;letter-spacing:0.000px;">R002</div>
<svg style="position:absolute;left:176px;top:533px;" width="17" height="17" viewBox="0 0 17 17"><circle cx="6.1" cy="5.9" r="4.85" fill="none" stroke="#333" stroke-width="1.5"/><path d="M9.7 9.5 L14.6 14.4" stroke="#333" stroke-width="1.8" stroke-linecap="round"/></svg>
<div class="t" style="left:197.00px;top:534.00px;font-size:13.0px;font-weight:400;color:#222222;letter-spacing:0.514px;">Seguro Paro Forzoso (Empleado)</div>
<div class="t" style="left:548.50px;top:534.00px;font-size:13.0px;font-weight:400;color:#222222;letter-spacing:0.671px;">Retencion</div>
<div style="left:650px;top:530px;width:144px;height:22px;box-sizing:border-box;background:#fff;border:1px solid #9b9b9b;border-radius:3px"></div>
<div class="t" style="left:765.20px;top:536.00px;font-size:11.9px;font-weight:400;color:#000;letter-spacing:0.667px;">1,46</div>
<div style="left:802px;top:530px;width:144px;height:22px;box-sizing:border-box;background:#fff;border:1px solid #9b9b9b;border-radius:3px"></div>
<div class="t" style="left:918.00px;top:536.00px;font-size:11.9px;font-weight:400;color:#000;letter-spacing:0.333px;">2,00</div>
<div style="left:956px;top:528px;width:27px;height:26px;box-sizing:border-box;background:#efefef;border:1px solid #a8a8a8;border-radius:3px"></div>
<div style="left:985px;top:530px;width:96px;height:22px;box-sizing:border-box;background:#fff;border:1px solid #9b9b9b;border-radius:3px"></div>
<div class="t" style="left:989.30px;top:534.00px;font-size:14.6px;font-weight:400;color:#000;letter-spacing:0.520px;">2 Lunes</div>
<svg style="position:absolute;left:1090px;top:531px;" width="17" height="20" viewBox="0 0 17 20"><rect x="2.5" y="3.6" width="12.1" height="13.8" rx="1.6" fill="none" stroke="#333" stroke-width="1.7"/><path d="M5.2 3.2 V5.2 H11.9 V3.2 H10.3 A1.75 1.75 0 0 0 6.8 3.2 Z" fill="none" stroke="#333" stroke-width="1.3" stroke-linejoin="round"/><path d="M5.6 14 L11.3 8.6" stroke="#333" stroke-width="1.8"/></svg>
<div class="t" style="left:1109.70px;top:534.00px;font-size:14.4px;font-weight:400;color:#222222;letter-spacing:0.980px;">Editar</div>
<div style="left:1180px;top:530px;width:120px;height:22px;box-sizing:border-box;background:#fff;border:1px solid #9b9b9b;border-radius:3px"></div>
<div style="left:1308px;top:530px;width:96px;height:22px;box-sizing:border-box;background:#fff;border:1px solid #9b9b9b;border-radius:3px"></div>
<div style="left:1412px;top:530px;width:72px;height:22px;box-sizing:border-box;background:#fff;border:1px solid #9b9b9b;border-radius:3px"></div>
<div class="t" style="left:1473.00px;top:536.00px;font-size:11.9px;font-weight:400;color:#000;letter-spacing:0.000px;">0</div>
<div style="left:15px;top:557px;width:1477px;height:32px;background:#f5f5f5"></div>
<div style="left:16px;top:559px;width:26px;height:26px;box-sizing:border-box;background:#efefef;border:1px solid #a8a8a8;border-radius:3px"></div>
<div class="t" style="left:56.10px;top:566.00px;font-size:13px;font-weight:400;color:#222222;letter-spacing:0.000px;">8</div>
<div style="left:76px;top:562px;width:96px;height:22px;box-sizing:border-box;background:#fff;border:1px solid #9b9b9b;border-radius:3px"></div>
<div class="t" style="left:79.10px;top:566.00px;font-size:14.6px;font-weight:400;color:#000;letter-spacing:0.333px;">R003</div>
<svg style="position:absolute;left:176px;top:565px;" width="17" height="17" viewBox="0 0 17 17"><circle cx="6.1" cy="5.9" r="4.85" fill="none" stroke="#333" stroke-width="1.5"/><path d="M9.7 9.5 L14.6 14.4" stroke="#333" stroke-width="1.8" stroke-linecap="round"/></svg>
<div class="t" style="left:197.00px;top:566.00px;font-size:13.0px;font-weight:400;color:#222222;letter-spacing:0.671px;">Fondo de Ahorro Obligatorio para la Vivieda</div>
<div class="t" style="left:548.50px;top:566.00px;font-size:13.0px;font-weight:400;color:#222222;letter-spacing:0.671px;">Retencion</div>
<div style="left:650px;top:562px;width:144px;height:22px;box-sizing:border-box;background:#fff;border:1px solid #9b9b9b;border-radius:3px"></div>
<div class="t" style="left:766.20px;top:568.00px;font-size:11.9px;font-weight:400;color:#000;letter-spacing:0.333px;">6,01</div>
<div style="left:802px;top:562px;width:144px;height:22px;box-sizing:border-box;background:#fff;border:1px solid #9b9b9b;border-radius:3px"></div>
<div class="t" style="left:917.00px;top:568.00px;font-size:11.9px;font-weight:400;color:#000;letter-spacing:0.667px;">0,00</div>
<div style="left:956px;top:560px;width:27px;height:26px;box-sizing:border-box;background:#efefef;border:1px solid #a8a8a8;border-radius:3px"></div>
<div style="left:985px;top:562px;width:96px;height:22px;box-sizing:border-box;background:#fff;border:1px solid #9b9b9b;border-radius:3px"></div>
<svg style="position:absolute;left:1090px;top:563px;" width="17" height="20" viewBox="0 0 17 20"><rect x="2.5" y="3.6" width="12.1" height="13.8" rx="1.6" fill="none" stroke="#333" stroke-width="1.7"/><path d="M5.2 3.2 V5.2 H11.9 V3.2 H10.3 A1.75 1.75 0 0 0 6.8 3.2 Z" fill="none" stroke="#333" stroke-width="1.3" stroke-linejoin="round"/><path d="M5.6 14 L11.3 8.6" stroke="#333" stroke-width="1.8"/></svg>
<div class="t" style="left:1109.70px;top:566.00px;font-size:14.4px;font-weight:400;color:#222222;letter-spacing:0.980px;">Editar</div>
<div style="left:1180px;top:562px;width:120px;height:22px;box-sizing:border-box;background:#fff;border:1px solid #9b9b9b;border-radius:3px"></div>
<div style="left:1308px;top:562px;width:96px;height:22px;box-sizing:border-box;background:#fff;border:1px solid #9b9b9b;border-radius:3px"></div>
<div style="left:1412px;top:562px;width:72px;height:22px;box-sizing:border-box;background:#fff;border:1px solid #9b9b9b;border-radius:3px"></div>
<div class="t" style="left:1473.00px;top:568.00px;font-size:11.9px;font-weight:400;color:#000;letter-spacing:0.000px;">0</div>
<div style="left:15px;top:589px;width:1477px;height:32px;background:#ededed"></div>
<div style="left:16px;top:591px;width:26px;height:26px;box-sizing:border-box;background:#efefef;border:1px solid #a8a8a8;border-radius:3px"></div>
<div class="t" style="left:56.10px;top:598.00px;font-size:13px;font-weight:400;color:#222222;letter-spacing:0.000px;">9</div>
<div style="left:76px;top:594px;width:96px;height:22px;box-sizing:border-box;background:#fff;border:1px solid #9b9b9b;border-radius:3px"></div>
<div class="t" style="left:79.10px;top:598.00px;font-size:14.6px;font-weight:400;color:#000;letter-spacing:0.333px;">U001</div>
<svg style="position:absolute;left:176px;top:597px;" width="17" height="17" viewBox="0 0 17 17"><circle cx="6.1" cy="5.9" r="4.85" fill="none" stroke="#333" stroke-width="1.5"/><path d="M9.7 9.5 L14.6 14.4" stroke="#333" stroke-width="1.8" stroke-linecap="round"/></svg>
<div class="t" style="left:197.00px;top:598.00px;font-size:13.0px;font-weight:400;color:#222222;letter-spacing:0.610px;">Seguro Social Obligatorio (Patrono)</div>
<div class="t" style="left:549.50px;top:598.00px;font-size:13.0px;font-weight:400;color:#222222;letter-spacing:0.907px;">Otro</div>
<div style="left:650px;top:594px;width:144px;height:22px;box-sizing:border-box;background:#fff;border:1px solid #9b9b9b;border-radius:3px"></div>
<div class="t" style="left:759.20px;top:600.00px;font-size:11.9px;font-weight:400;color:#000;letter-spacing:0.250px;">29,19</div>
<div style="left:802px;top:594px;width:144px;height:22px;box-sizing:border-box;background:#fff;border:1px solid #9b9b9b;border-radius:3px"></div>
<div class="t" style="left:917.00px;top:600.00px;font-size:11.9px;font-weight:400;color:#000;letter-spacing:0.667px;">0,00</div>
<div style="left:956px;top:592px;width:27px;height:26px;box-sizing:border-box;background:#efefef;border:1px solid #a8a8a8;border-radius:3px"></div>
<div style="left:985px;top:594px;width:96px;height:22px;box-sizing:border-box;background:#fff;border:1px solid #9b9b9b;border-radius:3px"></div>
<svg style="position:absolute;left:1090px;top:595px;" width="17" height="20" viewBox="0 0 17 20"><rect x="2.5" y="3.6" width="12.1" height="13.8" rx="1.6" fill="none" stroke="#333" stroke-width="1.7"/><path d="M5.2 3.2 V5.2 H11.9 V3.2 H10.3 A1.75 1.75 0 0 0 6.8 3.2 Z" fill="none" stroke="#333" stroke-width="1.3" stroke-linejoin="round"/><path d="M5.6 14 L11.3 8.6" stroke="#333" stroke-width="1.8"/></svg>
<div class="t" style="left:1109.70px;top:598.00px;font-size:14.4px;font-weight:400;color:#222222;letter-spacing:0.980px;">Editar</div>
<div style="left:1180px;top:594px;width:120px;height:22px;box-sizing:border-box;background:#fff;border:1px solid #9b9b9b;border-radius:3px"></div>
<div style="left:1308px;top:594px;width:96px;height:22px;box-sizing:border-box;background:#fff;border:1px solid #9b9b9b;border-radius:3px"></div>
<div style="left:1412px;top:594px;width:72px;height:22px;box-sizing:border-box;background:#fff;border:1px solid #9b9b9b;border-radius:3px"></div>
<div class="t" style="left:1473.00px;top:600.00px;font-size:11.9px;font-weight:400;color:#000;letter-spacing:0.000px;">0</div>
<div style="left:15px;top:621px;width:1477px;height:32px;background:#f5f5f5"></div>
<div style="left:16px;top:623px;width:26px;height:26px;box-sizing:border-box;background:#efefef;border:1px solid #a8a8a8;border-radius:3px"></div>
<div class="t" style="left:51.60px;top:630.00px;font-size:13px;font-weight:400;color:#222222;letter-spacing:1.000px;">10</div>
<div style="left:76px;top:626px;width:96px;height:22px;box-sizing:border-box;background:#fff;border:1px solid #9b9b9b;border-radius:3px"></div>
<div class="t" style="left:79.10px;top:630.00px;font-size:14.6px;font-weight:400;color:#000;letter-spacing:0.333px;">U002</div>
<svg style="position:absolute;left:176px;top:629px;" width="17" height="17" viewBox="0 0 17 17"><circle cx="6.1" cy="5.9" r="4.85" fill="none" stroke="#333" stroke-width="1.5"/><path d="M9.7 9.5 L14.6 14.4" stroke="#333" stroke-width="1.8" stroke-linecap="round"/></svg>
<div class="t" style="left:197.00px;top:630.00px;font-size:13.0px;font-weight:400;color:#222222;letter-spacing:0.431px;">Seguro Paro Forzoso (Patrono)</div>
<div class="t" style="left:549.50px;top:630.00px;font-size:13.0px;font-weight:400;color:#222222;letter-spacing:0.907px;">Otro</div>
<div style="left:650px;top:626px;width:144px;height:22px;box-sizing:border-box;background:#fff;border:1px solid #9b9b9b;border-radius:3px"></div>
<div class="t" style="left:765.20px;top:632.00px;font-size:11.9px;font-weight:400;color:#000;letter-spacing:0.667px;">4,38</div>
<div style="left:802px;top:626px;width:144px;height:22px;box-sizing:border-box;background:#fff;border:1px solid #9b9b9b;border-radius:3px"></div>
<div class="t" style="left:917.00px;top:632.00px;font-size:11.9px;font-weight:400;color:#000;letter-spacing:0.667px;">0,00</div>
<div style="left:956px;top:624px;width:27px;height:26px;box-sizing:border-box;background:#efefef;border:1px solid #a8a8a8;border-radius:3px"></div>
<div style="left:985px;top:626px;width:96px;height:22px;box-sizing:border-box;background:#fff;border:1px solid #9b9b9b;border-radius:3px"></div>
<svg style="position:absolute;left:1090px;top:627px;" width="17" height="20" viewBox="0 0 17 20"><rect x="2.5" y="3.6" width="12.1" height="13.8" rx="1.6" fill="none" stroke="#333" stroke-width="1.7"/><path d="M5.2 3.2 V5.2 H11.9 V3.2 H10.3 A1.75 1.75 0 0 0 6.8 3.2 Z" fill="none" stroke="#333" stroke-width="1.3" stroke-linejoin="round"/><path d="M5.6 14 L11.3 8.6" stroke="#333" stroke-width="1.8"/></svg>
<div class="t" style="left:1109.70px;top:630.00px;font-size:14.4px;font-weight:400;color:#222222;letter-spacing:0.980px;">Editar</div>
<div style="left:1180px;top:626px;width:120px;height:22px;box-sizing:border-box;background:#fff;border:1px solid #9b9b9b;border-radius:3px"></div>
<div style="left:1308px;top:626px;width:96px;height:22px;box-sizing:border-box;background:#fff;border:1px solid #9b9b9b;border-radius:3px"></div>
<div style="left:1412px;top:626px;width:72px;height:22px;box-sizing:border-box;background:#fff;border:1px solid #9b9b9b;border-radius:3px"></div>
<div class="t" style="left:1473.00px;top:632.00px;font-size:11.9px;font-weight:400;color:#000;letter-spacing:0.000px;">0</div>
<div style="left:15px;top:653px;width:1477px;height:32px;background:#ededed"></div>
<div style="left:16px;top:655px;width:26px;height:26px;box-sizing:border-box;background:#efefef;border:1px solid #a8a8a8;border-radius:3px"></div>
<div class="t" style="left:51.60px;top:662.00px;font-size:13px;font-weight:400;color:#222222;letter-spacing:2.000px;">11</div>
<div style="left:76px;top:658px;width:96px;height:22px;box-sizing:border-box;background:#fff;border:1px solid #9b9b9b;border-radius:3px"></div>
<div class="t" style="left:79.10px;top:662.00px;font-size:14.6px;font-weight:400;color:#000;letter-spacing:0.333px;">U003</div>
<svg style="position:absolute;left:176px;top:661px;" width="17" height="17" viewBox="0 0 17 17"><circle cx="6.1" cy="5.9" r="4.85" fill="none" stroke="#333" stroke-width="1.5"/><path d="M9.7 9.5 L14.6 14.4" stroke="#333" stroke-width="1.8" stroke-linecap="round"/></svg>
<div class="t" style="left:197.00px;top:662.00px;font-size:13.0px;font-weight:400;color:#222222;letter-spacing:0.652px;">Fondo de Ahorro Obligatorio para la Vivieda (Patron...</div>
<div class="t" style="left:549.50px;top:662.00px;font-size:13.0px;font-weight:400;color:#222222;letter-spacing:0.907px;">Otro</div>
<div style="left:650px;top:658px;width:144px;height:22px;box-sizing:border-box;background:#fff;border:1px solid #9b9b9b;border-radius:3px"></div>
<div class="t" style="left:758.20px;top:664.00px;font-size:11.9px;font-weight:400;color:#000;letter-spacing:0.500px;">12,01</div>
<div style="left:802px;top:658px;width:144px;height:22px;box-sizing:border-box;background:#fff;border:1px solid #9b9b9b;border-radius:3px"></div>
<div class="t" style="left:917.00px;top:664.00px;font-size:11.9px;font-weight:400;color:#000;letter-spacing:0.667px;">0,00</div>
<div style="left:956px;top:656px;width:27px;height:26px;box-sizing:border-box;background:#efefef;border:1px solid #a8a8a8;border-radius:3px"></div>
<div style="left:985px;top:658px;width:96px;height:22px;box-sizing:border-box;background:#fff;border:1px solid #9b9b9b;border-radius:3px"></div>
<svg style="position:absolute;left:1090px;top:659px;" width="17" height="20" viewBox="0 0 17 20"><rect x="2.5" y="3.6" width="12.1" height="13.8" rx="1.6" fill="none" stroke="#333" stroke-width="1.7"/><path d="M5.2 3.2 V5.2 H11.9 V3.2 H10.3 A1.75 1.75 0 0 0 6.8 3.2 Z" fill="none" stroke="#333" stroke-width="1.3" stroke-linejoin="round"/><path d="M5.6 14 L11.3 8.6" stroke="#333" stroke-width="1.8"/></svg>
<div class="t" style="left:1109.70px;top:662.00px;font-size:14.4px;font-weight:400;color:#222222;letter-spacing:0.980px;">Editar</div>
<div style="left:1180px;top:658px;width:120px;height:22px;box-sizing:border-box;background:#fff;border:1px solid #9b9b9b;border-radius:3px"></div>
<div style="left:1308px;top:658px;width:96px;height:22px;box-sizing:border-box;background:#fff;border:1px solid #9b9b9b;border-radius:3px"></div>
<div style="left:1412px;top:658px;width:72px;height:22px;box-sizing:border-box;background:#fff;border:1px solid #9b9b9b;border-radius:3px"></div>
<div class="t" style="left:1473.00px;top:664.00px;font-size:11.9px;font-weight:400;color:#000;letter-spacing:0.000px;">0</div>
<div class="t" style="left:15.50px;top:718.00px;font-size:13.4px;font-weight:400;color:#222222;letter-spacing:0.758px;">Asignaciones:</div>
<div style="left:123px;top:714px;width:144px;height:21px;box-sizing:border-box;background:#f0f0f0;border:1px solid #9b9b9b;border-radius:3px"></div>
<div class="t" style="left:224.00px;top:719.00px;font-size:12.2px;font-weight:400;color:#333;letter-spacing:0.400px;">558,42</div>
<div class="t" style="left:14.50px;top:745.60px;font-size:13.4px;font-weight:400;color:#222222;letter-spacing:0.455px;">Deducciones:</div>
<div style="left:123px;top:743px;width:144px;height:21px;box-sizing:border-box;background:#f0f0f0;border:1px solid #9b9b9b;border-radius:3px"></div>
<div class="t" style="left:238.00px;top:746.60px;font-size:12.2px;font-weight:400;color:#333;letter-spacing:0.333px;">0,00</div>
<div class="t" style="left:500.00px;top:718.00px;font-size:13.4px;font-weight:400;color:#222222;letter-spacing:0.818px;">Retenciones:</div>
<div style="left:609px;top:714px;width:144px;height:21px;box-sizing:border-box;background:#f0f0f0;border:1px solid #9b9b9b;border-radius:3px"></div>
<div class="t" style="left:717.00px;top:719.00px;font-size:12.2px;font-weight:400;color:#333;letter-spacing:0.500px;">19,15</div>
<div class="t" style="left:501.00px;top:745.60px;font-size:13.4px;font-weight:400;color:#222222;letter-spacing:1.100px;">Otros:</div>
<div style="left:609px;top:743px;width:144px;height:21px;box-sizing:border-box;background:#f0f0f0;border:1px solid #9b9b9b;border-radius:3px"></div>
<div class="t" style="left:710.00px;top:746.60px;font-size:12.2px;font-weight:400;color:#333;letter-spacing:0.400px;">678,08</div>
<div class="t" style="left:985.60px;top:718.00px;font-size:13.4px;font-weight:400;color:#222222;letter-spacing:1.825px;">Neto:</div>
<div style="left:1047px;top:714px;width:144px;height:21px;box-sizing:border-box;background:#f0f0f0;border:1px solid #9b9b9b;border-radius:3px"></div>
<div class="t" style="left:1148.00px;top:719.00px;font-size:12.2px;font-weight:400;color:#333;letter-spacing:0.400px;">539,27</div>
<div style="left:12px;top:791px;width:1550px;height:18px;background:#3a5fa5;border-radius:4px 4px 0 0"></div>
<div style="left:12px;top:791px;width:1550px;height:18px;overflow:hidden">
<div class="t" style="left:9.50px;top:6.00px;font-size:15.5px;font-weight:700;color:#fff;letter-spacing:1.289px;">Documento de Origen:</div>
</div>
<div style="left:7px;top:820px;width:102px;height:36px;background:#f3f3f3;border-radius:3px"></div>
<div style="left:121px;top:820px;width:102px;height:36px;background:#f3f3f3;border-radius:3px"></div>
<div style="left:235px;top:820px;width:102px;height:36px;background:#f3f3f3;border-radius:3px"></div>
<div style="left:349px;top:820px;width:102px;height:36px;background:#f3f3f3;border-radius:3px"></div>
<div style="left:463px;top:820px;width:101px;height:36px;background:#f3f3f3;border-radius:3px"></div>
<div style="left:564px;top:820px;width:32px;height:36px;background:#f3f3f3;border-radius:3px"></div>
<svg style="position:absolute;left:9px;top:824px;" width="26" height="30" viewBox="0 0 26 30"><path d="M11.6 22.9 H4.8 Q2.8 22.9 2.8 20.9 V4.6 Q2.8 2.6 4.8 2.6 H16.9 Q18.9 2.6 18.9 4.6 V15.8" fill="none" stroke="#5a5a5a" stroke-width="2.2"/><path d="M18.9 18.6 V27.6 M14.4 23 H23.8" stroke="#5a5a5a" stroke-width="2.2"/></svg>
<div class="t" style="left:38.40px;top:830.00px;font-size:14.4px;font-weight:400;color:#666;letter-spacing:0.883px;">Agregar</div>
<svg style="position:absolute;left:123px;top:824px;" width="26" height="30" viewBox="0 0 26 30"><path d="M9.2 24.3 H4.5 Q2.5 24.3 2.5 22.3 V4.6 Q2.5 2.6 4.5 2.6 H17.1 Q19.1 2.6 19.1 4.6 V13.4" fill="none" stroke="#5a5a5a" stroke-width="2.2"/><path d="M13.3 24.2 L22.3 15.2" stroke="#5a5a5a" stroke-width="3"/></svg>
<div class="t" style="left:151.60px;top:830.00px;font-size:14.4px;font-weight:400;color:#666;letter-spacing:0.900px;">Editar</div>
<svg style="position:absolute;left:237px;top:824px;" width="26" height="30" viewBox="0 0 26 30"><path d="M8.7 23.1 H4.5 Q2.5 23.1 2.5 21.1 V4.4 Q2.5 2.4 4.5 2.4 H17 Q19 2.4 19 4.4 V12.5" fill="none" stroke="#5a5a5a" stroke-width="2.2"/><circle cx="15.3" cy="19.1" r="4.2" fill="none" stroke="#5a5a5a" stroke-width="2.2"/><path d="M18.3 22.2 L22.3 26.6" stroke="#5a5a5a" stroke-width="2.4"/></svg>
<div class="t" style="left:265.50px;top:830.00px;font-size:14.4px;font-weight:400;color:#666;letter-spacing:0.800px;">Buscar</div>
<svg style="position:absolute;left:351px;top:824px;" width="26" height="30" viewBox="0 0 26 30"><rect x="2.6" y="6.3" width="19.3" height="3.7" rx="1.8" fill="none" stroke="#5a5a5a" stroke-width="2"/><path d="M8.7 6.3 V3.6 Q8.7 2.6 9.7 2.6 H14.8 Q15.8 2.6 15.8 3.6 V6.3 M5.4 10.5 V23.3 Q5.4 24.3 6.4 24.3 H18 Q19 24.3 19 23.3 V10.5" fill="none" stroke="#5a5a5a" stroke-width="2"/><path d="M8.7 12.5 V21 M12 12.5 V21 M15.3 12.5 V21" stroke="#5a5a5a" stroke-width="1.6"/></svg>
<div class="t" style="left:379.50px;top:830.00px;font-size:14.4px;font-weight:400;color:#666;letter-spacing:1.000px;">Eliminar</div>
<svg style="position:absolute;left:465px;top:824px;" width="26" height="30" viewBox="0 0 26 30"><rect x="5.7" y="2.5" width="12.5" height="5.1" rx="0.8" fill="none" stroke="#5a5a5a" stroke-width="1.6"/><path d="M5.2 20.6 H4.8 Q1.8 20.6 1.8 17.6 V11.7 Q1.8 8.7 4.8 8.7 H18.6 Q21.6 8.7 21.6 11.7 V17.6 Q21.6 20.6 18.6 20.6 H18.2" fill="none" stroke="#5a5a5a" stroke-width="1.6"/><circle cx="18.2" cy="11" r="0.9" fill="#5a5a5a"/><rect x="5.2" y="16.6" width="13.6" height="7.9" rx="0.8" fill="none" stroke="#5a5a5a" stroke-width="1.6"/><path d="M6 19 H18 M6 21.2 H18" stroke="#5a5a5a" stroke-width="1.1"/></svg>
<div class="t" style="left:493.50px;top:830.00px;font-size:14.4px;font-weight:400;color:#666;letter-spacing:1.600px;">Imprimir</div>
<svg style="position:absolute;left:567px;top:826px;" width="26" height="22" viewBox="0 0 26 22"><path d="M3.3 10.7 L13.5 3.1 L23.7 10.7 M3.3 19.1 L13.5 11.5 L23.7 19.1" fill="none" stroke="#5a5a5a" stroke-width="2.1"/></svg>
<svg style="position:absolute;left:611px;top:824px;" width="27" height="27" viewBox="0 0 27 27"><circle cx="13.6" cy="13.4" r="10.9" fill="none" stroke="#2a2a2a" stroke-width="2.2"/><path d="M10.6 10.3 C10.6 6.6 16.8 6.6 16.8 10.3 C16.8 12.8 13.7 12.8 13.7 15.3 V15.8" fill="none" stroke="#2a2a2a" stroke-width="2.3"/><rect x="12.4" y="17.7" width="2.6" height="2.6" fill="#2a2a2a"/></svg>
<svg style="position:absolute;left:656px;top:827px;" width="25" height="22" viewBox="0 0 25 22"><path d="M3.1 11.2 L9.2 17.5 L22.2 4" fill="none" stroke="#2a2a2a" stroke-width="2.3"/></svg>
<div class="t" style="left:686.50px;top:830.00px;font-size:14.4px;font-weight:400;color:#222;letter-spacing:0.667px;">Aceptar</div>
<svg style="position:absolute;left:772px;top:827px;" width="23" height="23" viewBox="0 0 23 23"><path d="M3 3 L20 20 M20 3 L3 20" fill="none" stroke="#2a2a2a" stroke-width="2.3"/></svg>
<div class="t" style="left:800.50px;top:830.00px;font-size:14.4px;font-weight:400;color:#222;letter-spacing:0.500px;">Cancelar</div>
</body></html>
